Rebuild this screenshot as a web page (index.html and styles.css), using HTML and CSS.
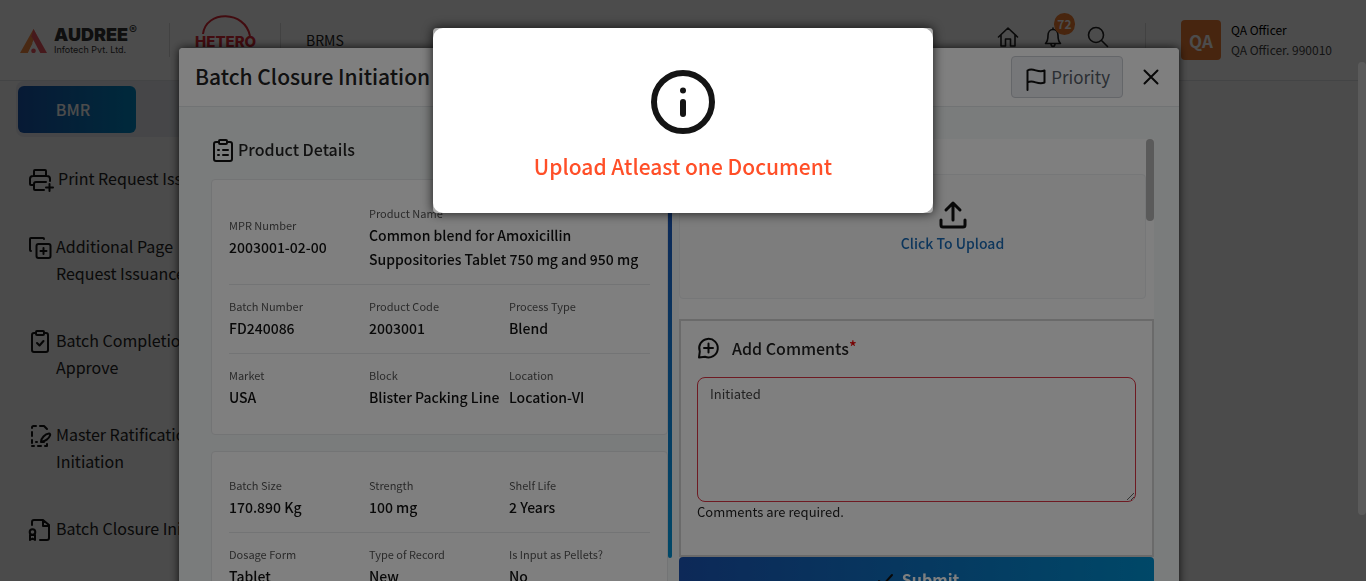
FILE: index.html
```html
<!DOCTYPE html>
<html lang="en">
<head>
<meta charset="utf-8">
<title>BRMS - Batch Closure Initiation</title>
<link rel="stylesheet" href="styles.css">
</head>
<body>
<div class="page">
  <header class="topbar">
    <a class="audree" href="#">
      <svg class="audree-mark" viewBox="0 0 26 23" aria-hidden="true"><path d="M13 0 0 23h7.500L15.500 5z" fill="#f58a42"/><path d="M13 0 26 23h-6.500L11 7z" fill="#ec5560"/><path d="M10 11 3.500 23H7l5-9z" fill="#f58a42"/><circle cx="13" cy="21" r="2.200" fill="#ec5560"/></svg>
      <span class="audree-text"><span class="audree-name">AUDREE<sup>®</sup></span><span class="audree-sub">Infotech Pvt. Ltd.</span></span>
    </a>
    <span class="divider"></span>
    <a class="hetero" href="#">
      <svg class="hetero-arc" viewBox="0 0 60 21" aria-hidden="true"><path d="M8 19C11-5 50-5 55 21" fill="none" stroke="#dd2a36" stroke-width="2"/></svg>
      <span class="hetero-name">HETERO</span>
    </a>
    <span class="divider"></span>
    <span class="app-name">BRMS</span>
    <div class="actions">
      <button class="icon-btn" aria-label="Home"><svg width="22" height="22" viewBox="0 0 22 22"><path d="M1.500 11 11 2l9.500 9M4 9v11h4.500v-7h5v7H18V9" /></svg></button>
      <button class="icon-btn bell" aria-label="Notifications"><svg width="18" height="22" viewBox="0 0 18 22"><path d="M1.500 17.500h15c-2-2-2.500-4-2.500-8 0-3.500-2-6-5-6s-5 2.500-5 6c0 4-.5 6-2.500 8zM9 3.500V2M7 18.500c.5 2.500 3.500 2.500 4 0"/></svg><span class="badge">72</span></button>
      <button class="icon-btn" aria-label="Search"><svg width="22" height="22" viewBox="0 0 22 22"><circle cx="9" cy="9" r="7.500"/><path d="m14.500 14.500 6 6"/></svg></button>
    </div>
    <span class="divider"></span>
    <div class="user">
      <span class="avatar">QA</span>
      <span class="user-text"><span class="user-name">QA Officer</span><span class="user-id">QA Officer. 990010</span></span>
    </div>
  </header>
  <div class="tabs"><button class="tab">BMR</button></div>
  <nav class="side">
    <a class="side-link wide" href="#"><svg class="line-icon" viewBox="0 0 24 24"><path d="M6 8V3a1 1 0 0 1 1-1h10a1 1 0 0 1 1 1v5M5 17H3a1 1 0 0 1-1-1v-5a3 3 0 0 1 3-3h14a3 3 0 0 1 3 3v2M18 14H8a2 2 0 0 0-2 2v5a1 1 0 0 0 1 1h9M21.500 16v7M18 19.500h7"/></svg><span>Print Request Issuance</span></a>
    <a class="side-link" href="#"><svg class="line-icon" viewBox="0 0 24 24"><path d="M3 15a1 1 0 0 1-1-1V3a1 1 0 0 1 1-1h12a1 1 0 0 1 1 1M15.500 12v6M12.500 15h6"/><rect x="8.500" y="8" width="14" height="14" rx="2"/></svg><span>Additional Page<br>Request Issuance</span></a>
    <a class="side-link" href="#"><svg class="line-icon" viewBox="0 0 24 24"><path d="M8 3H6a2 2 0 0 0-2 2v15a2 2 0 0 0 2 2h12a2 2 0 0 0 2-2V5a2 2 0 0 0-2-2h-2M9 13l2.500 2.500L15.500 11"/><rect x="8" y="1" width="8" height="4" rx="1"/></svg><span>Batch Completion<br>Approve</span></a>
    <a class="side-link" href="#"><svg class="line-icon" viewBox="0 0 24 24"><path d="M4 4V3.500A1.500 1.500 0 0 1 5.500 2H8M12 2h4l3 3M4 8v4M4 16v3M4 22h2M10 22h3M17 22h2v-2M8 18h1M13 18c0-4 4-8 8-8.500 1 0 1.500 1 1 2-1 3-5 6-8 6zM13 18h3"/></svg><span>Master Ratification<br>Initiation</span></a>
    <a class="side-link" href="#"><svg class="line-icon" viewBox="0 0 24 24"><path d="M4 7V4a2 2 0 0 1 2-2h9l6 5v13a2 2 0 0 1-2 2h-7M15 2v6h6M2 22v-5h5v5l-2.500-1.500z"/><circle cx="4.500" cy="14" r="2.800"/></svg><span>Batch Closure Initiation</span></a>
  </nav>
</div>

<div class="overlay modal-layer">
  <section class="modal" role="dialog" aria-labelledby="modal-title">
    <header class="modal-head">
      <h1 id="modal-title">Batch Closure Initiation</h1>
      <button class="priority"><svg width="20" height="22" viewBox="0 0 20 22"><path d="M1.500 22V2.500c6-3.500 10 3 17 0v12c-7 3-11-3.500-17 0"/></svg><span>Priority</span></button>
      <button class="close" aria-label="Close"><svg width="16" height="16" viewBox="0 0 16 16"><path d="m1.500 1.500 13 13M14.500 1.500l-13 13"/></svg></button>
    </header>
    <div class="modal-body">
      <div class="details">
        <h2 class="details-title"><svg class="line-icon" viewBox="0 0 24 24"><path d="M8 4H5a2 2 0 0 0-2 2v15a2 2 0 0 0 2 2h14a2 2 0 0 0 2-2V6a2 2 0 0 0-2-2h-3M7 12h1M12 12h5M7 17h1M12 17h5"/><rect x="8" y="2" width="8" height="4" rx="1"/></svg><span>Product Details</span></h2>
        <div class="card">
          <dl class="row">
            <div><dt>MPR Number</dt><dd>2003001-02-00</dd></div>
            <div class="span2"><dt>Product Name</dt><dd>Common blend for Amoxicillin Suppositories Tablet 750 mg and 950 mg</dd></div>
          </dl>
          <dl class="row">
            <div><dt>Batch Number</dt><dd>FD240086</dd></div>
            <div><dt>Product Code</dt><dd>2003001</dd></div>
            <div><dt>Process Type</dt><dd>Blend</dd></div>
          </dl>
          <dl class="row">
            <div><dt>Market</dt><dd>USA</dd></div>
            <div><dt>Block</dt><dd>Blister Packing Line</dd></div>
            <div><dt>Location</dt><dd>Location-VI</dd></div>
          </dl>
        </div>
        <div class="card">
          <dl class="row">
            <div><dt>Batch Size</dt><dd>170.890 Kg</dd></div>
            <div><dt>Strength</dt><dd>100 mg</dd></div>
            <div><dt>Shelf Life</dt><dd>2 Years</dd></div>
          </dl>
          <dl class="row">
            <div><dt>Dosage Form</dt><dd>Tablet</dd></div>
            <div><dt>Type of Record</dt><dd>New</dd></div>
            <div><dt>Is Input as Pellets?</dt><dd>No</dd></div>
          </dl>
        </div>
      </div>
      <div class="bar"></div>
      <div class="work">
        <div class="uploads">
          <div class="dropzone">
            <svg width="28" height="28" viewBox="0 0 28 28"><path d="M14 19V2M7 9l7-7 7 7M2 19v5a2 2 0 0 0 2 2h20a2 2 0 0 0 2-2v-5"/></svg>
            <a href="#">Click To Upload</a>
          </div>
          <span class="thumb"></span>
        </div>
        <form class="comments">
          <label for="comment"><svg width="22" height="22" viewBox="0 0 22 22"><path d="M2 20.500l.8-6A9.300 9.300 0 1 1 8 19.800zM11.500 6.500v9M7 11h9"/></svg><span>Add Comments<span class="req">*</span></span></label>
          <textarea id="comment">Initiated</textarea>
          <p>Comments are required.</p>
        </form>
        <button class="submit"><svg width="20" height="20" viewBox="0 0 20 20"><path d="m5 12 4 4L18 6"/></svg>Submit</button>
      </div>
    </div>
  </section>
  <span class="page-thumb"></span>
</div>

<div class="overlay alert-layer">
  <div class="alert-frame">
    <div class="alert" role="alertdialog" aria-labelledby="alert-text">
      <svg width="64" height="64" viewBox="0 0 64 64"><circle cx="32" cy="32" r="29" fill="none" stroke="#141414" stroke-width="6"/><circle cx="32" cy="20.500" r="3" fill="#141414"/><rect x="29" y="29" width="6" height="18" rx="3" fill="#141414"/></svg>
      <p id="alert-text">Upload Atleast one Document</p>
    </div>
  </div>
</div>
</body>
</html>
```
FILE: styles.css
```css
* { box-sizing: border-box; }

body, h1, h2, p, dl, dd { margin: 0; }

body {
  height: 100vh;
  overflow: hidden;
  background: #fafafa;
  color: #222;
  font-family: "Noto Sans CJK SC", sans-serif;
  font-size: 13px;
}

button, textarea { font: inherit; color: inherit; }
a { color: inherit; text-decoration: none; }
svg { display: block; flex: none; }

.icon-btn svg, .line-icon, .priority svg, .close svg, .dropzone svg, .comments svg, .submit svg {
  fill: none;
  stroke: #111;
  stroke-width: 2;
  stroke-linecap: round;
  stroke-linejoin: round;
  overflow: visible;
}

.line-icon { width: 24px; height: 24px; }

/* Application page */
.topbar {
  display: flex;
  align-items: center;
  height: 81px;
  padding: 0 34px 0 20px;
  border-bottom: 1px solid #e2e4e8;
  background: #fff;
}

.divider { width: 1px; height: 34px; background: #dcdcdc; }

.audree { display: flex; align-items: flex-end; gap: 7px; width: 149px; }
.audree-mark { width: 27px; height: 24px; margin-bottom: 2px; }
.audree-text { display: flex; flex-direction: column; color: #333; font-family: Inter, sans-serif; }
.audree-name { font-size: 18px; font-weight: 900; line-height: 18px; white-space: nowrap; }
.audree-name sup { margin-left: 1px; font-size: 12px; font-weight: 500; line-height: 0; }
.audree-sub { font-size: 9px; line-height: 11px; white-space: nowrap; }

.hetero { width: 110px; padding: 0 0 18px 25px; color: #dd2a36; }
.hetero-arc { width: 60px; height: 21px; }
.hetero-name { display: block; font: 800 15px/12px Inter, sans-serif; }

.app-name { padding-left: 25px; font-size: 14px; }

.actions { display: flex; align-items: center; gap: 25px; margin-left: auto; padding: 0 36px 6px 0; }
.icon-btn { position: relative; display: flex; padding: 0; border: 0; background: none; }
.icon-btn svg { stroke: #222; stroke-width: 1.6; }
.badge {
  position: absolute;
  left: 10px;
  top: -13px;
  width: 21px;
  height: 22px;
  border-radius: 11px;
  background: #f07c30;
  color: #fff;
  font-size: 12px;
  font-weight: 700;
  line-height: 22px;
  text-align: center;
}

.user { display: flex; align-items: center; gap: 10px; padding-left: 35px; }
.avatar {
  width: 40px;
  height: 40px;
  border-radius: 4px;
  background: #ee7c34;
  color: #fff;
  font-size: 17px;
  font-weight: 700;
  line-height: 42px;
  text-align: center;
}
.user-text { display: flex; flex-direction: column; font-size: 12px; line-height: 20px; }
.user-name { color: #000; }
.user-id { color: #444; }

.tabs { width: 400px; margin-left: 16px; padding: 5px 2px 4px; border-radius: 8px; background: #e9ecf2; }
.tab {
  display: block;
  width: 118px;
  height: 47px;
  padding: 0 8px 2px 0;
  border: 0;
  border-radius: 6px;
  background: linear-gradient(90deg, #1a57b0, #008ac8);
  color: #fff;
  font-size: 16px;
  font-weight: 500;
}

.side { display: flex; flex-direction: column; gap: 40px; padding: 28px; font-size: 16px; line-height: 27px; }
.side-link { display: flex; gap: 4px; white-space: nowrap; }
.side-link.wide { gap: 6px; padding-bottom: 1px; }
.side-link .line-icon { margin-top: 3px; }

/* Layers */
.overlay { position: fixed; inset: 0; display: flex; justify-content: center; align-items: flex-start; }
.modal-layer { padding: 48px 8px 0 0; background: rgb(0 0 0 / 0.4); overflow: hidden; }
.alert-layer { padding-top: 28px; background: rgb(0 0 0 / 0.5); }

.page-thumb {
  position: absolute;
  right: 0;
  top: 62px;
  width: 8px;
  height: 78vh;
  border-radius: 4px;
  background: #b4b4b4;
}

.modal {
  width: 1000px;
  max-width: 100%;
  border-radius: 4px;
  background: #f5f9f8;
  box-shadow: 0 0 10px rgb(0 0 0 / 0.8);
}
.modal-head {
  display: flex;
  align-items: center;
  height: 59px;
  padding: 0 20px 0 16px;
  border-bottom: 1px solid #e2e6e8;
  border-radius: 4px 4px 0 0;
  background: #fff;
}
.modal-head h1 { margin-right: auto; padding-bottom: 2px; font-size: 21px; font-weight: 500; }
.priority {
  display: flex;
  align-items: center;
  gap: 5px;
  height: 42px;
  padding: 0 12px 0 14px;
  border: 1px solid #c9ccd2;
  border-radius: 4px;
  background: #eceef2;
  color: #555c66;
  font-size: 17px;
}
.priority svg { margin-top: 3px; }
.priority span { padding-bottom: 2px; }
.close { margin-left: 20px; padding: 0; border: 0; background: none; }

.modal-body { display: flex; align-items: flex-start; padding: 32px 25px 32px 32px; }
.details { flex: 0 0 457px; }
.details-title {
  display: flex;
  align-items: center;
  gap: 3px;
  height: 22px;
  margin-bottom: 18px;
  font-size: 16px;
  font-weight: 500;
}
.details-title span { padding-bottom: 2px; }
.card { margin-bottom: 16px; padding: 12px 17px; border: 1px solid #e6e8ea; border-radius: 4px; background: #fff; }
.row { display: grid; grid-template-columns: repeat(3, 140px); align-items: center; padding: 11px 0 13px; }
.row + .row { border-top: 1px solid #e6e8ea; }
.span2 { grid-column: span 2; }
dt { color: #555; font-size: 11px; line-height: 20px; }
dd { color: #111; font-size: 14px; font-weight: 500; line-height: 24px; }

.bar {
  flex: 0 0 4px;
  height: 419px;
  border-radius: 2px;
  background: linear-gradient(#1a52b0, #1a52b0 15%, #0090d0);
}

.work { flex: 1; margin-left: 7px; }
.uploads { position: relative; height: 180px; padding: 35px 8px 0 0; background: #fff; }
.dropzone {
  display: flex;
  flex-direction: column;
  align-items: center;
  gap: 4px;
  height: 125px;
  padding: 26px 0 0 80px;
  border: 1px solid #eceef0;
  border-radius: 4px;
  background: #fafafa;
}
.dropzone svg { stroke-width: 3; }
.dropzone a { color: #1a6cb8; font-size: 14px; font-weight: 500; }
.thumb { position: absolute; right: 0; top: 0; width: 8px; height: 82px; border-radius: 4px; background: #b4b4b4; }

.comments { height: 238px; padding: 14px 16px; border: 2px solid #d4d4d4; background: #fff; }
.comments label { display: flex; align-items: center; gap: 13px; height: 26px; font-size: 16px; font-weight: 500; }
.comments label span { padding-bottom: 1px; }
.comments .req { color: #e00; font-size: 16px; vertical-align: 2px; line-height: 0; }
.comments textarea {
  display: block;
  width: 100%;
  height: 125px;
  margin-top: 16px;
  padding: 6px 12px;
  border: 1px solid #dc3545;
  border-radius: 8px;
  background: #fff;
  color: #444;
}
.comments p { line-height: 20px; }

.submit {
  display: flex;
  justify-content: center;
  align-items: center;
  gap: 8px;
  width: 100%;
  height: 44px;
  border: 0;
  border-radius: 4px;
  background: linear-gradient(90deg, #1a52b0, #0090d0);
  color: #fff;
  font-size: 16px;
  font-weight: 700;
}

.alert-frame { width: 500px; max-width: 100%; border-radius: 4px; background: #aaa; box-shadow: 0 0 12px rgb(0 0 0 / 0.8); }
.alert {
  display: flex;
  flex-direction: column;
  align-items: center;
  gap: 14px;
  padding: 42px 24px 29px;
  border-radius: 10px;
  background: #fff;
}
.alert p { color: #ff4f28; font-size: 21px; font-weight: 500; line-height: 36px; }
```
